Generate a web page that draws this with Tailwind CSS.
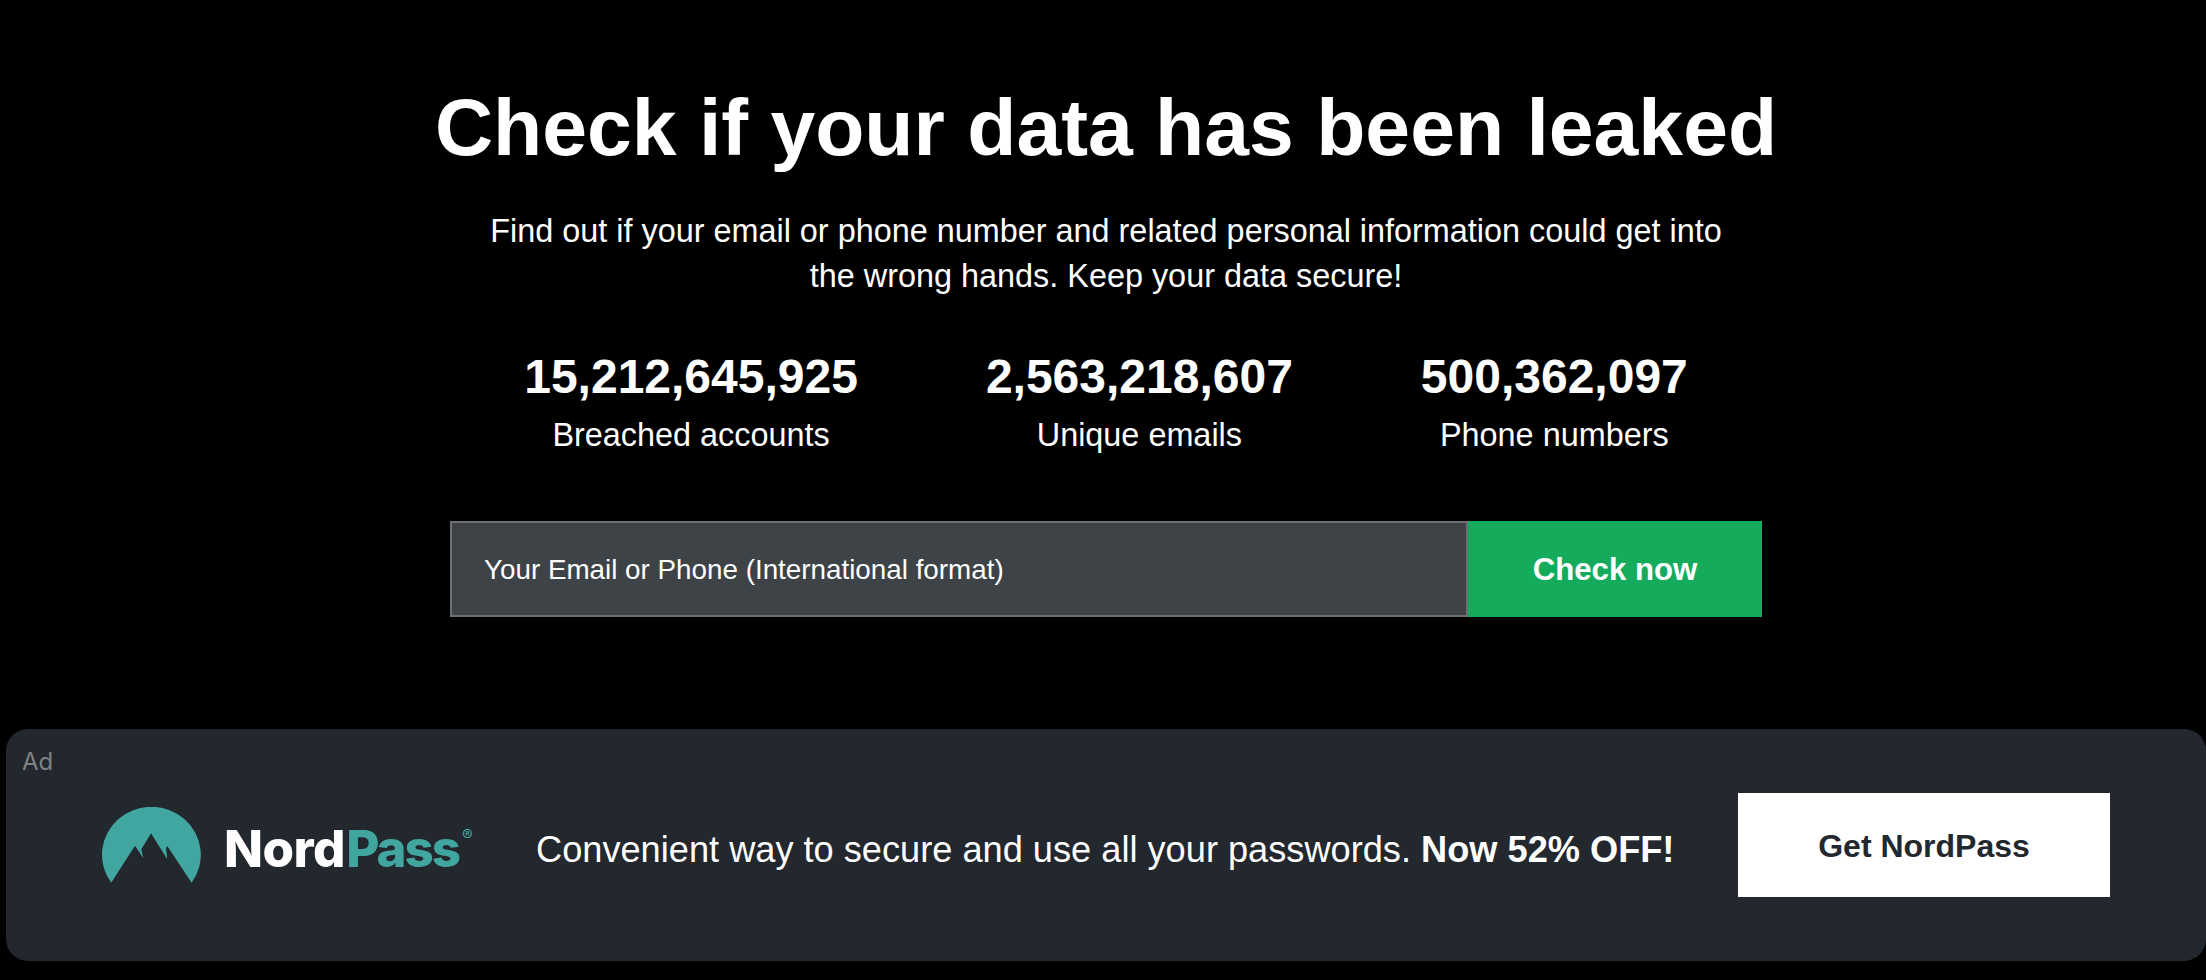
<!DOCTYPE html>
<html lang="en">
<head>
    <meta charset="UTF-8">
    <meta name="viewport" content="width=device-width, initial-scale=1.0">
    <title>Check if your data has been leaked</title>
    <script src="https://cdn.jsdelivr.net/npm/@tailwindcss/browser@4"></script>
</head>
<body class="bg-black text-white font-['Liberation_Sans',Arial,sans-serif] h-[980px] overflow-hidden">
    <div class="pl-[6px]">
        <!-- Hero -->
        <section class="flex flex-col items-center pt-[79px]">
            <h1 class="text-[80.5px] leading-[96px] font-bold whitespace-nowrap">Check if your data has been leaked</h1>
            <p class="mt-[34px] text-[32.4px] leading-[45px] text-center w-[1300px]">Find out if your email or phone number and related personal information could get into<br>the wrong hands. Keep your data secure!</p>

            <div class="flex gap-[128px] mt-[48px]">
                <div class="text-center">
                    <div class="text-[48px] leading-[60px] font-bold">15,212,645,925</div>
                    <div class="text-[32.4px] leading-[40px] mt-[8px]">Breached accounts</div>
                </div>
                <div class="text-center">
                    <div class="text-[48px] leading-[60px] font-bold">2,563,218,607</div>
                    <div class="text-[32.4px] leading-[40px] mt-[8px]">Unique emails</div>
                </div>
                <div class="text-center">
                    <div class="text-[48px] leading-[60px] font-bold">500,362,097</div>
                    <div class="text-[32.4px] leading-[40px] mt-[8px]">Phone numbers</div>
                </div>
            </div>

            <form class="flex w-[1312px] h-[96px] mt-[66px]">
                <input type="text" placeholder="Your Email or Phone (International format)" class="flex-1 min-w-0 bg-[#3e4347] border-2 border-[#6d7073] pl-[32px] pt-[2px] text-[27.8px] text-white placeholder:text-white outline-none">
                <button type="button" class="w-[294px] bg-[#14ab5d] text-white text-[31.2px] font-bold pt-[3px]">Check now</button>
            </form>
        </section>

        <!-- Ad banner -->
        <aside class="relative mt-[112px] h-[232px] bg-[#23272e] rounded-[22px] flex items-center pl-[96px] pr-[96px]">
            <span class="absolute left-[16px] top-[19px] text-[24px] leading-[28px] text-[#808285] font-['Inter',sans-serif]">Ad</span>
            <svg class="w-[100px] h-[78px] shrink-0 mt-[2px]" viewBox="102 807 100 78" fill="#41a6a0">
                <path d="M111.2 882.7 A49.4 48 0 1 1 191.6 882.7 L167.3 846 L166 848.3 L167.3 859.3 L151 833.3 L141.3 849.3 L143.3 858.3 L135 845.7 Z"/>
            </svg>
            <div class="ml-[22px] w-[252px] shrink-0 flex items-start mt-[8px] font-['Inter',sans-serif] font-extrabold text-[51px] leading-[60px]">
                <span class="text-white tracking-[-0.5px]">Nord</span><span class="text-[#41a6a0] tracking-[-2px] ml-[1px]">Pass</span><span class="text-[#41a6a0] text-[16px] leading-[16px] font-normal mt-[8px] ml-[3px]">®</span>
            </div>
            <p class="ml-[60px] text-[36.2px] leading-[44px] whitespace-nowrap mt-[9px]">Convenient way to secure and use all your passwords. <b>Now 52% OFF!</b></p>
            <a class="ml-auto w-[372px] h-[104px] bg-white text-[#23272e] text-[32px] font-bold flex items-center justify-center pt-[2px]">Get NordPass</a>
        </aside>
    </div>
</body>
</html>
